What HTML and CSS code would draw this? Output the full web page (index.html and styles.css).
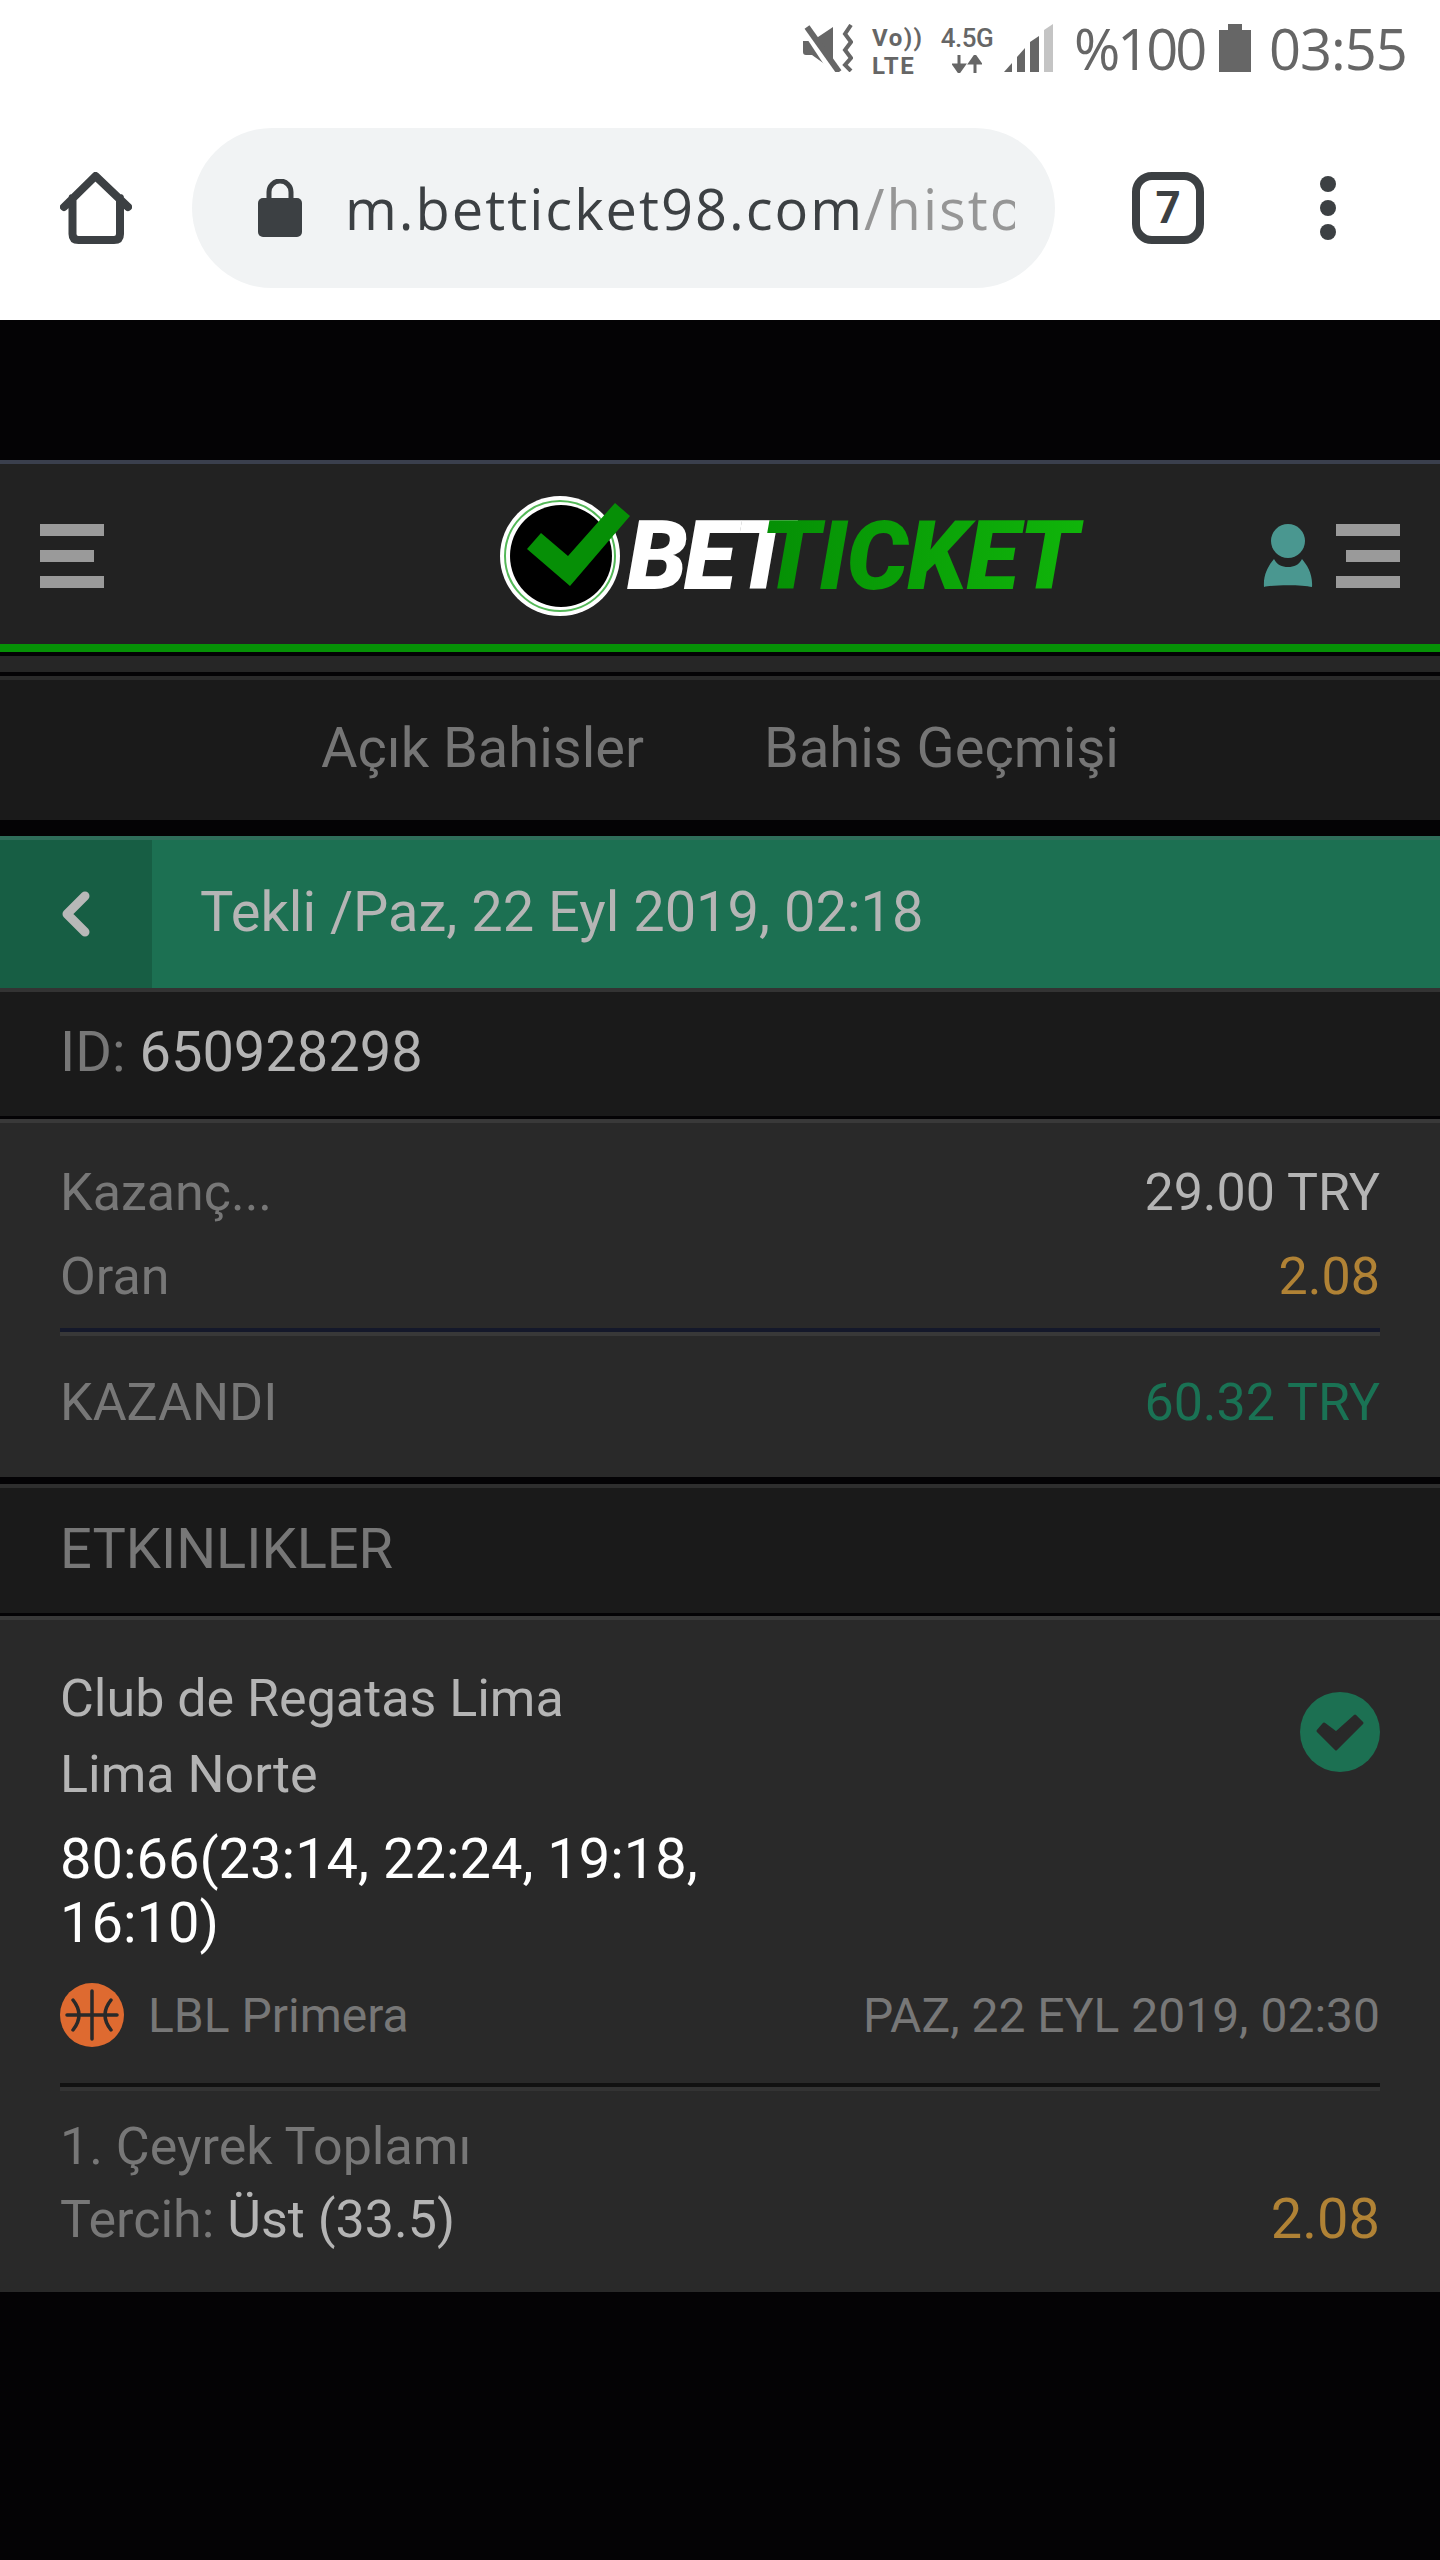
FILE: index.html
```html
<!doctype html>
<html lang="tr">

<head>
  <meta charset="UTF-8" />
  <meta name="viewport" content="width=device-width, initial-scale=1.0">
  <title>BetTicket</title>
  <link rel="stylesheet" href="styles.css">
</head>

<body>
  <div class="browser">
    <div class="status-bar">
      <svg class="icon-mute" viewBox="0 0 50 48" width="50" height="48">
        <path d="M0 17h9L30 3v43L9 31H3q-3 0-3-3z" fill="#666" />
        <path d="M-1 0L32 50" stroke="#fff" stroke-width="8" />
        <path d="M4 3L36 48" stroke="#666" stroke-width="6" />
        <path d="M48 1L42 10L48 18L42 26L48 34L42 41L48 47" stroke="#666" stroke-width="4" fill="none" />
      </svg>
      <div class="volte">
        <span>Vo))</span>
        <span>LTE</span>
      </div>
      <div class="net">
        <span>4.5G</span>
        <svg viewBox="0 0 30 18" width="30" height="18">
          <path d="M7 0v10M2 10l5 7 5-7z" stroke="#666" stroke-width="3" fill="#666" />
          <path d="M23 18V8M18 8l5-7 5 7z" stroke="#666" stroke-width="3" fill="#666" />
        </svg>
      </div>
      <svg class="icon-signal" viewBox="0 0 49 48" width="49" height="48">
        <path d="M0 48L8 39V48z" fill="#666" />
        <path d="M13 48V33L21 24V48z" fill="#666" />
        <path d="M26 48V18L35 12V48z" fill="#666" />
        <path d="M40 48V6L49 0V48z" fill="#c4c4c4" />
      </svg>
      <span class="status-text battery-text">%100</span>
      <svg class="icon-battery" viewBox="0 0 32 48" width="32" height="48">
        <path d="M0 6h9V0h14v6h9v42H0z" fill="#666" />
      </svg>
      <span class="status-text clock">03:55</span>
    </div>

    <div class="toolbar">
      <svg class="icon-home" viewBox="0 0 72 72" width="72" height="72">
        <path d="M4 35L35.500 4L68 35M12.500 26V62q0 6 6 6H54q6 0 6-6V26" fill="none" stroke="#3c4043" stroke-width="8" stroke-linejoin="round" stroke-linecap="round" />
      </svg>
      <div class="omnibox">
        <svg class="icon-lock" viewBox="0 0 44 58" width="44" height="58">
          <path d="M11 20V13a11 11 0 0 1 22 0v7" fill="none" stroke="#3c4043" stroke-width="5" />
          <rect x="0" y="19" width="44" height="39" rx="5" fill="#3c4043" />
        </svg>
        <div class="url"><span class="url-host">m.betticket98.com</span>/history</div>
      </div>
      <div class="tab-count">7</div>
      <div class="dots">
        <i></i>
        <i></i>
        <i></i>
      </div>
    </div>
  </div>

  <div class="page">
    <div class="site-header">
      <div class="burger">
        <i></i>
        <i class="short"></i>
        <i></i>
      </div>
      <div class="logo">
        <svg viewBox="0 0 132 120" width="132" height="120">
          <circle cx="60" cy="60" r="60" fill="#fff" />
          <circle cx="60" cy="60" r="55" fill="none" stroke="#54b858" stroke-width="2" />
          <circle cx="61" cy="60" r="51" fill="#000" />
          <path d="M27 53L41 37L68 60L115 7L130 20L70 90z" fill="#068f06" />
        </svg>
        <span class="logo-bet">BET</span><span class="logo-ticket">TICKET</span>
      </div>
      <div class="header-right">
        <svg viewBox="0 0 50 64" width="50" height="64">
          <ellipse cx="25" cy="17" rx="17" ry="17" fill="#4a9790" />
          <path d="M1 63C0 50 6 41 11 35C14 41 19 43 25 43C31 43 36 41 39 35C44 41 50 50 49 63C40 60.500 10 60.500 1 63z" fill="#4a9790" />
        </svg>
        <div class="burger burger-right">
          <i></i>
          <i class="short"></i>
          <i></i>
        </div>
      </div>
    </div>
    <div class="green-line"></div>
    <div class="sub-strip"></div>

    <div class="tabs">
      <span>Açık Bahisler</span>
      <span>Bahis Geçmişi</span>
    </div>

    <div class="title-bar">
      <div class="back">
        <svg viewBox="0 0 28 46" width="28" height="46">
          <path d="M23 5L5 23L23 41" fill="none" stroke="#b8b8b8" stroke-width="9" stroke-linecap="round" stroke-linejoin="round" />
        </svg>
      </div>
      <div class="title-text">Tekli /Paz, 22 Eyl 2019, 02:18</div>
    </div>

    <div class="id-row"><span class="muted">ID:</span> 650928298</div>

    <div class="panel summary">
      <div class="row"><span class="muted">Kazanç...</span><span class="value">29.00 TRY</span></div>
      <div class="row"><span class="muted">Oran</span><span class="gold">2.08</span></div>
      <div class="divider divider-navy"></div>
      <div class="row"><span class="muted">KAZANDI</span><span class="won">60.32 TRY</span></div>
    </div>

    <div class="section-title">ETKINLIKLER</div>

    <div class="panel event">
      <div class="event-top">
        <div>
          <div class="team">Club de Regatas Lima</div>
          <div class="team">Lima Norte</div>
          <div class="score">80:66(23:14, 22:24, 19:18, 16:10)</div>
        </div>
        <svg class="icon-won" viewBox="0 0 80 80" width="80" height="80">
          <circle cx="40" cy="40" r="40" fill="#1c7052" />
          <path d="M18 39L24 32L36 41L55 24L62 31L36 57z" fill="#292929" stroke="#292929" stroke-width="3" stroke-linejoin="round" />
        </svg>
      </div>
      <div class="league-row">
        <div class="league">
          <svg viewBox="0 0 64 64" width="64" height="64">
            <circle cx="32" cy="32" r="32" fill="#de6a30" />
            <path d="M32 8V56M7 32H57M13 17Q25 32 13 47M51 17Q39 32 51 47" fill="none" stroke="#292929" stroke-width="3.500" stroke-linecap="round" />
          </svg>
          <span>LBL Primera</span>
        </div>
        <span class="date">PAZ, 22 EYL 2019, 02:30</span>
      </div>
      <div class="divider divider-dark"></div>
      <div class="market muted">1. Çeyrek Toplamı</div>
      <div class="pick-row">
        <div><span class="muted">Tercih:</span> <span class="value">Üst (33.5)</span></div>
        <span class="gold big">2.08</span>
      </div>
    </div>
  </div>
</body>

</html>
```

FILE: styles.css
```css
body {
  margin: 0;
  padding: 0;
  background-color: #040305;
  font-family: Roboto, Arial, sans-serif;
  overflow: hidden;
}

svg {
  display: block;
  flex: none;
}

/* phone status bar + browser toolbar */
.browser {
  background-color: #fff;
  height: 320px;
}

.status-bar {
  height: 100px;
  box-sizing: border-box;
  padding: 24px 32px 0 0;
  display: flex;
  justify-content: flex-end;
  align-items: flex-start;
  color: #666;
}

.volte {
  margin-left: 19px;
  width: 48px;
  font-size: 24px;
  font-weight: 700;
  line-height: 28px;
  letter-spacing: 1.5px;
}

.volte span {
  display: block;
}

.net {
  margin-left: 20px;
  width: 54px;
  font-size: 26px;
  font-weight: 500;
  line-height: 28px;
  letter-spacing: -0.5px;
  text-align: center;
}

.net svg {
  margin: 3px auto 0;
}

.icon-signal {
  margin-left: 10px;
}

.status-text {
  font-family: "Open Sans", sans-serif;
  font-size: 56px;
  line-height: 56px;
  color: #666;
  margin-top: -4px;
}

.battery-text {
  margin-left: 21px;
  width: 131px;
  letter-spacing: -3px;
}

.icon-battery {
  margin-left: 14px;
}

.clock {
  margin-left: 18px;
  width: 139px;
  letter-spacing: -1px;
}

.toolbar {
  display: flex;
  align-items: center;
  padding: 28px 0 32px 60px;
}

.omnibox {
  margin-left: 60px;
  width: 863px;
  height: 160px;
  box-sizing: border-box;
  border-radius: 80px;
  background-color: #f1f3f4;
  padding: 0 40px 0 66px;
  display: flex;
  align-items: center;
}

.url {
  margin-left: 43px;
  font-family: "Open Sans", sans-serif;
  font-size: 56px;
  letter-spacing: 2px;
  color: #969696;
  white-space: nowrap;
  overflow: hidden;
}

.url-host {
  color: #3c4043;
}

.tab-count {
  margin-left: 77px;
  width: 72px;
  height: 72px;
  box-sizing: border-box;
  border: 8px solid #3c4043;
  border-radius: 20px;
  color: #3c4043;
  font-size: 44px;
  font-weight: 700;
  line-height: 56px;
  text-align: center;
}

.dots {
  margin-left: 116px;
  display: flex;
  flex-direction: column;
  gap: 8px;
}

.dots i {
  width: 16px;
  height: 16px;
  border-radius: 50%;
  background-color: #3c4043;
}

/* site */
.page {
  padding-top: 140px;
  color: #b4b4b4;
}

.site-header {
  height: 176px;
  background-color: #222;
  border-top: 4px solid #3a3f4d;
  display: flex;
  align-items: center;
  padding: 4px 40px 0;
}

.burger {
  width: 64px;
  display: flex;
  flex-direction: column;
  gap: 14px;
}

.burger i {
  display: block;
  height: 12px;
  background-color: #9a9a9a;
}

.burger .short {
  width: 54px;
}

.burger-right {
  align-items: flex-end;
}

.burger-right i {
  width: 100%;
}

.burger-right .short {
  width: 54px;
}

.logo {
  margin-left: 396px;
  display: flex;
  align-items: center;
  font-size: 97px;
  font-weight: 900;
  font-style: italic;
  letter-spacing: -4px;
  line-height: 120px;
}

.logo svg {
  margin-right: -5px;
}

.logo-bet {
  color: #fff;
}

.logo-ticket {
  margin-left: -28px;
  padding-right: 8px;
  letter-spacing: -1px;
  background: linear-gradient(90deg, #058f05, #10b50a);
  -webkit-background-clip: text;
  background-clip: text;
  color: transparent;
}

.header-right {
  margin-left: auto;
  display: flex;
  align-items: center;
  gap: 23px;
}

.green-line {
  height: 8px;
  background-color: #069106;
}

.sub-strip {
  margin-top: 4px;
  height: 16px;
  background-color: #262626;
}

.tabs {
  margin-top: 4px;
  height: 136px;
  border-top: 4px solid #2a2a2a;
  background-color: #1a1a1a;
  display: flex;
  justify-content: center;
  align-items: center;
  gap: 120px;
  font-size: 56px;
  color: #757575;
  padding-bottom: 4px;
}

.title-bar {
  margin-top: 16px;
  height: 148px;
  border-top: 4px solid #2f6d5a;
  border-bottom: 4px solid #333;
  background-color: #1c7052;
  display: flex;
}

.back {
  width: 152px;
  background-color: #175e44;
  display: flex;
  justify-content: center;
  align-items: center;
}

.title-text {
  padding-left: 48px;
  font-size: 56px;
  line-height: 144px;
  color: #b5b5b5;
}

.id-row {
  height: 124px;
  background-color: #1a1a1a;
  padding-left: 60px;
  font-size: 56px;
  line-height: 120px;
}

.muted {
  color: #777;
}

.panel {
  margin-top: 3px;
  border-top: 4px solid #393939;
  background-color: #292929;
  padding: 0 60px;
}

.summary {
  padding-top: 27px;
  padding-bottom: 33px;
}

.row {
  height: 84px;
  display: flex;
  justify-content: space-between;
  align-items: center;
  font-size: 52px;
}

.value {
  color: #b4b4b4;
}

.gold {
  color: #b08235;
}

.won {
  color: #1a7254;
}

.divider {
  height: 4px;
}

.divider-navy {
  margin: 10px 0 24px;
  background-color: #14182a;
  border-bottom: 4px solid #383838;
}

.divider-dark {
  margin: 36px 0 20px;
  background-color: #111;
  border-bottom: 4px solid #333;
}

.section-title {
  margin-top: 7px;
  height: 125px;
  border-top: 4px solid #2e2e2e;
  background-color: #1a1a1a;
  padding-left: 60px;
  font-size: 56px;
  line-height: 122px;
  color: #777;
}

.event {
  padding-top: 41px;
  padding-bottom: 37px;
}

.event-top {
  display: flex;
  justify-content: space-between;
  align-items: flex-start;
}

.team {
  font-size: 52px;
  line-height: 76px;
  color: #b4b4b4;
}

.score {
  margin-top: 14px;
  max-width: 720px;
  font-size: 56px;
  line-height: 64px;
  color: #fff;
}

.icon-won {
  margin-top: 31px;
}

.league-row {
  margin-top: 28px;
  display: flex;
  justify-content: space-between;
  align-items: center;
  font-size: 48px;
  color: #777;
}

.league {
  display: flex;
  align-items: center;
  gap: 24px;
}

.market {
  font-size: 52px;
  line-height: 72px;
}

.pick-row {
  height: 72px;
  display: flex;
  justify-content: space-between;
  align-items: center;
  font-size: 52px;
}

.big {
  font-size: 56px;
}
```
